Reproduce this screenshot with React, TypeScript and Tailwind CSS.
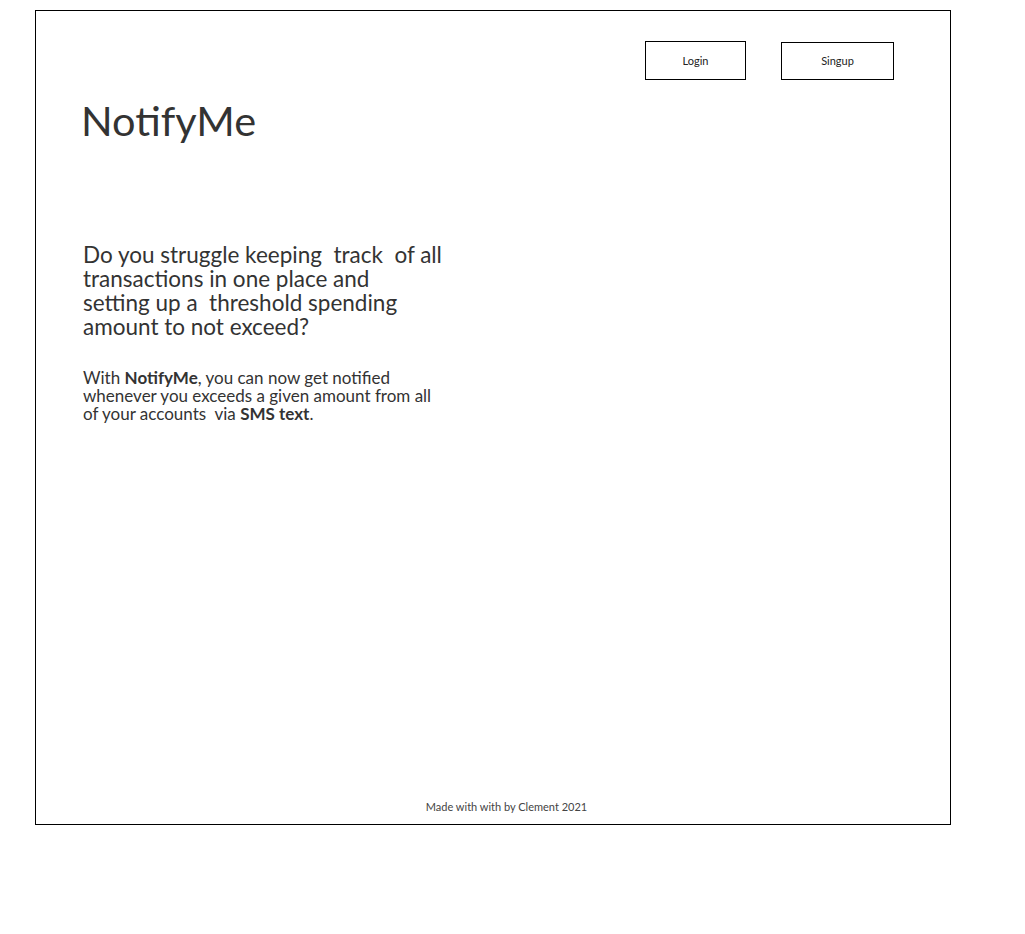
export default function App() {
  return (
    <div className="min-h-screen bg-white pt-[10px] pl-[35px] text-[#333]" style={{ fontFamily: "Lato, 'Open Sans', sans-serif" }}>
      <div className="relative flex h-[815px] w-[916px] flex-col border border-black">
        <header className="flex items-start justify-end gap-[35px] pt-[30px] pr-[56px]">
          <button className="h-[39px] w-[101px] border border-black pt-[1px] text-[11px] text-[#222]">Login</button>
          <button className="mt-[1px] h-[38px] w-[113px] border border-black text-[11px] text-[#222]">Singup</button>
        </header>

        <h1 className="mt-[13px] pl-[45px] text-[41.5px] leading-[54px] text-[#333]">NotifyMe</h1>

        <section className="mt-[96px] pl-[47px]">
          <h2 className="text-[22.5px] leading-[24px] whitespace-pre">
            <span className="block">Do you struggle keeping  track  of all</span>
            <span className="block">transactions in one place and</span>
            <span className="block">setting up a  threshold spending</span>
            <span className="block">amount to not exceed?</span>
          </h2>
          <p className="mt-[30px] text-[17px] leading-[18px] whitespace-pre">
            <span className="block">
              With <b>NotifyMe</b>, you can now get notified
            </span>
            <span className="block">whenever you exceeds a given amount from all</span>
            <span className="block">
              of your accounts  via <b>SMS text</b>.
            </span>
          </p>
        </section>

        <footer className="mt-auto pb-[9px] pl-[27px] text-center text-[11px] text-[#444]">Made with with by Clement 2021</footer>
      </div>
    </div>
  );
}
